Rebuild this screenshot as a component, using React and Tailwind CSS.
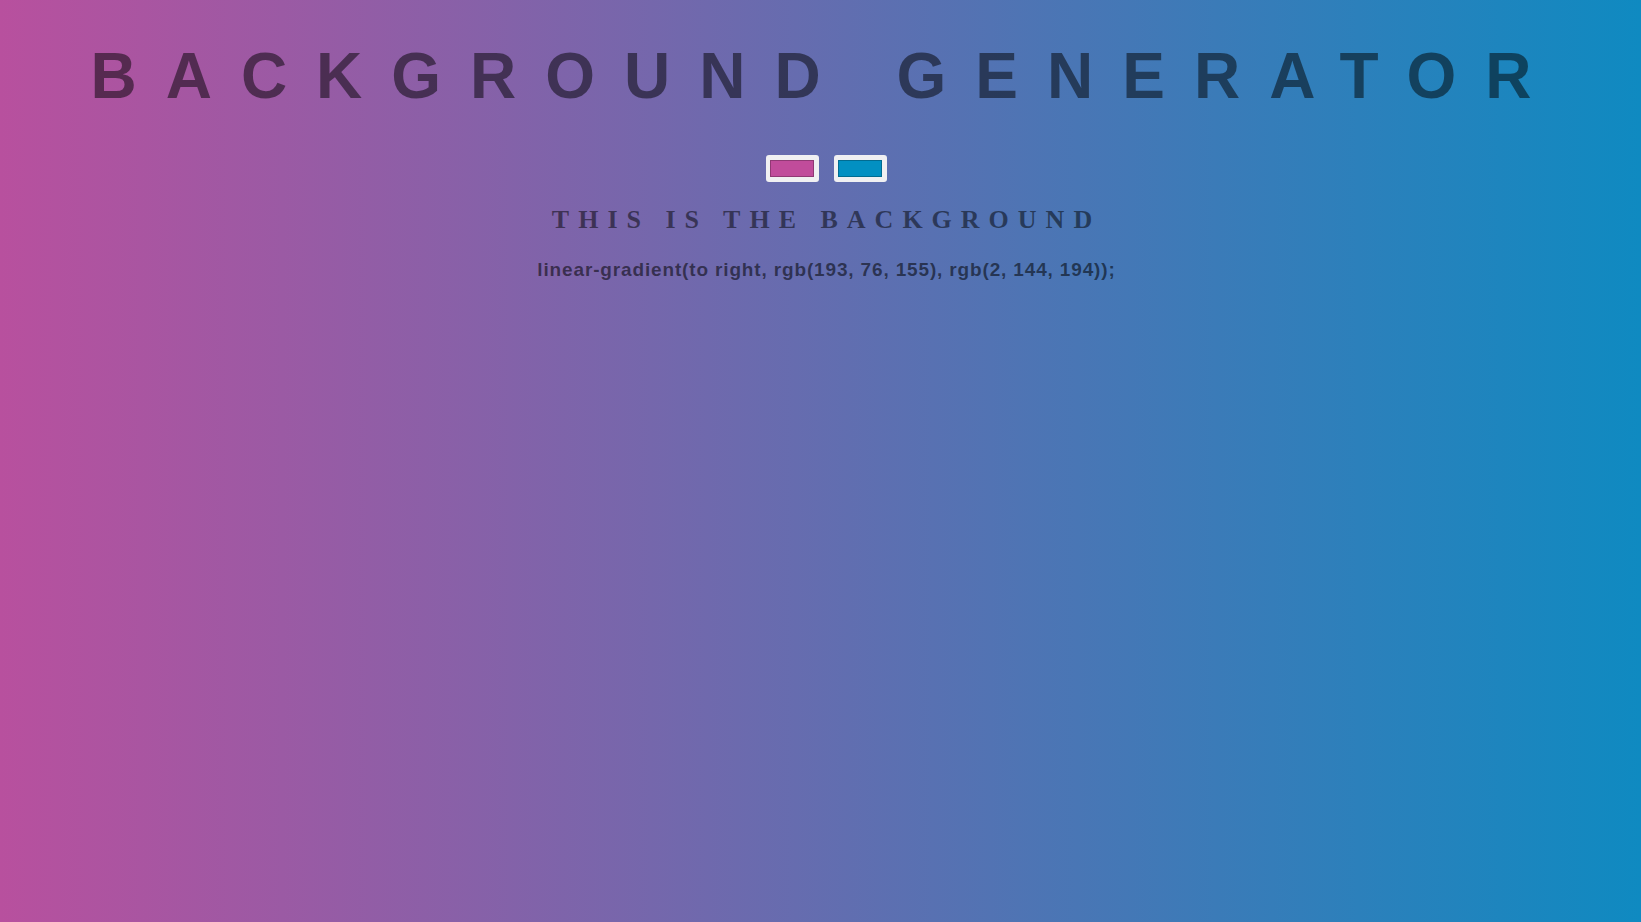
const colors = ['#c14c9b', '#0290c2'];

function Swatch({ color }) {
  return (
    <div className="w-[53px] h-[27px] bg-[#f0f0f2] rounded-[3px] pt-[5px] pb-[5px] pl-[4px] pr-[5px]">
      <div className="w-full h-full border border-black/25" style={{ backgroundColor: color }} />
    </div>
  );
}

export default function App() {
  return (
    <div className="min-h-screen w-full bg-[linear-gradient(to_right,#b8509e,#0f8ac1)] text-black/50">
      <h1 className="pt-[39px] pl-[10px] text-center font-['Liberation_Sans',Arial,sans-serif] font-bold text-[64px] leading-[74px] tracking-[29px] uppercase">
        Background Generator
      </h1>

      <div className="pl-[12px] flex flex-col items-center">
        <div className="mt-[42px] flex gap-[15px]">
          {colors.map((c) => (
            <Swatch key={c} color={c} />
          ))}
        </div>

        <h2 className="mt-[23px] font-['Liberation_Serif','Times_New_Roman',serif] font-bold text-[26px] leading-[30px] tracking-[9px] uppercase">
          This is the background
        </h2>

        <h3 className="mt-[24px] font-['Liberation_Sans',Arial,sans-serif] font-bold text-[19px] leading-[22px] tracking-[0.85px] text-black/55">
          linear-gradient(to right, rgb(193, 76, 155), rgb(2, 144, 194));
        </h3>
      </div>
    </div>
  );
}
